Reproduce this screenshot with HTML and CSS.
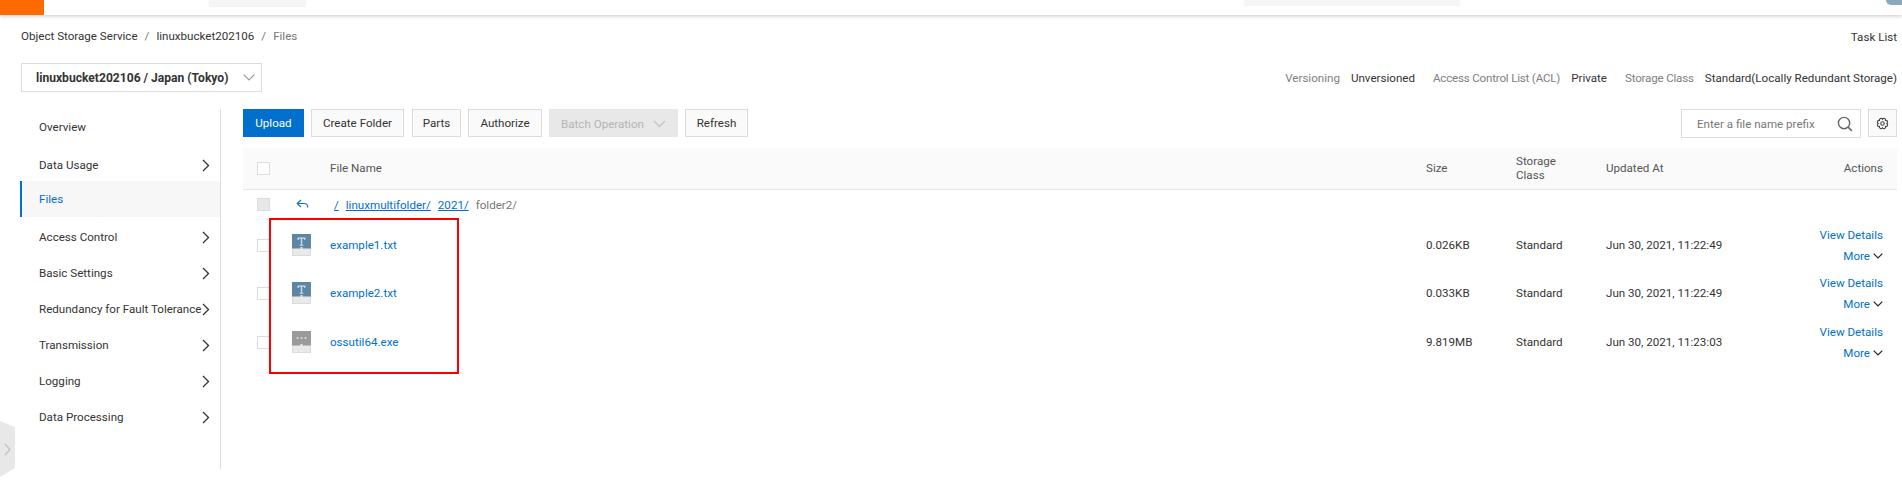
FILE: index.html
```html
<!DOCTYPE html>
<html lang="en">
<head>
<meta charset="utf-8">
<title>Object Storage Service - Files</title>
<link rel="stylesheet" href="styles.css">
</head>
<body>
<header class="topbar">
  <div class="logo"></div>
  <div class="top-search"></div>
  <div class="top-links"></div>
  <div class="avatar"></div>
</header>

<div class="crumbs">
  <nav class="crumb-path">
    <span>Object Storage Service</span><span class="sep">/</span><span>linuxbucket202106</span><span class="sep">/</span><span class="muted">Files</span>
  </nav>
  <span class="task-list">Task List</span>
</div>

<div class="bucketbar">
  <div class="bucket-select">
    <b>linuxbucket202106 / Japan (Tokyo)</b>
    <svg class="sel-caret" width="12" height="7" viewBox="0 0 12 7"><path d="M.7.700L6 6l5.300-5.300" fill="none" stroke="#999" stroke-width="1.200"/></svg>
  </div>
  <div class="meta">
    <span class="meta-l">Versioning</span><span class="meta-v gap1">Unversioned</span>
    <span class="meta-l tight">Access Control List (ACL)</span><span class="meta-v gap2">Private</span>
    <span class="meta-l tight">Storage Class</span><span class="meta-v">Standard(Locally Redundant Storage)</span>
  </div>
</div>

<div class="layout">
  <aside class="sidebar">
    <div class="nav-item">Overview</div>
    <div class="nav-item nav-usage">Data Usage<svg class="chev" width="8" height="13" viewBox="0 0 8 13"><path d="M1 1l5.5 5.500-5.500 5.500" fill="none" stroke="#333" stroke-width="1.300"/></svg></div>
    <div class="nav-item nav-active">Files</div>
    <div class="nav-item nav-access">Access Control<svg class="chev" width="8" height="13" viewBox="0 0 8 13"><path d="M1 1l5.5 5.500-5.500 5.500" fill="none" stroke="#333" stroke-width="1.300"/></svg></div>
    <div class="nav-item">Basic Settings<svg class="chev" width="8" height="13" viewBox="0 0 8 13"><path d="M1 1l5.5 5.500-5.500 5.500" fill="none" stroke="#333" stroke-width="1.300"/></svg></div>
    <div class="nav-item">Redundancy for Fault Tolerance<svg class="chev" width="8" height="13" viewBox="0 0 8 13"><path d="M1 1l5.5 5.500-5.500 5.500" fill="none" stroke="#333" stroke-width="1.300"/></svg></div>
    <div class="nav-item">Transmission<svg class="chev" width="8" height="13" viewBox="0 0 8 13"><path d="M1 1l5.5 5.500-5.500 5.500" fill="none" stroke="#333" stroke-width="1.300"/></svg></div>
    <div class="nav-item">Logging<svg class="chev" width="8" height="13" viewBox="0 0 8 13"><path d="M1 1l5.5 5.500-5.500 5.500" fill="none" stroke="#333" stroke-width="1.300"/></svg></div>
    <div class="nav-item">Data Processing<svg class="chev" width="8" height="13" viewBox="0 0 8 13"><path d="M1 1l5.5 5.500-5.500 5.500" fill="none" stroke="#333" stroke-width="1.300"/></svg></div>
  </aside>

  <main class="content">
    <div class="toolbar">
      <button class="btn btn-primary">Upload</button>
      <button class="btn w-folder">Create Folder</button>
      <button class="btn w-parts">Parts</button>
      <button class="btn w-auth">Authorize</button>
      <button class="btn btn-disabled">Batch Operation<svg width="13" height="8" viewBox="0 0 13 8"><path d="M1 1l5.500 5.500 5.500-5.500" fill="none" stroke="#c4c4c4" stroke-width="1.300"/></svg></button>
      <button class="btn w-refresh">Refresh</button>
      <div class="spacer"></div>
      <div class="search">
        <span class="placeholder">Enter a file name prefix</span>
        <svg width="16" height="16" viewBox="0 0 17 17"><circle cx="7.500" cy="7.500" r="6" fill="none" stroke="#666" stroke-width="1.500"/><path d="M11.800 11.800l4 4" stroke="#666" stroke-width="1.600"/></svg>
      </div>
      <button class="btn btn-gear" aria-label="Settings">
        <svg width="13" height="13" viewBox="0 0 12 12"><path d="M10 6A1.550 1.550 0 0 1 8.830 8.830 1.550 1.550 0 0 1 6 10 1.550 1.550 0 0 1 3.170 8.830 1.550 1.550 0 0 1 2 6 1.550 1.550 0 0 1 3.170 3.170 1.550 1.550 0 0 1 6 2 1.550 1.550 0 0 1 8.830 3.170 1.550 1.550 0 0 1 10 6z" fill="none" stroke="#444" stroke-width="1"/><circle cx="6" cy="6" r="1.600" fill="none" stroke="#444" stroke-width="1"/></svg>
      </button>
    </div>

    <div class="tbl-head tbl-grid">
      <span class="check"></span>
      <span class="col-name">File Name</span>
      <span>Size</span>
      <span class="col-class">Storage<br>Class</span>
      <span>Updated At</span>
      <span class="col-actions">Actions</span>
    </div>

    <div class="path-row">
      <span class="check check-off"></span>
      <svg class="back" width="13" height="11" viewBox="0 0 13 11"><path d="M5 1L1.200 4.500 5 8M1.500 4.500h6.500c2.500 0 3.800 1.500 3.800 4" fill="none" stroke="#1d6fc4" stroke-width="1.200"/></svg>
      <a class="plink first">/</a><a class="plink">linuxmultifolder/</a><a class="plink">2021/</a><span class="muted">folder2/</span>
    </div>

    <div class="row tbl-grid">
      <span class="check"></span>
      <span class="cell-name">
        <svg class="ficon" width="19" height="22" viewBox="0 0 19 22"><rect width="19" height="22" fill="#e9e9e9"/><rect x=".5" y=".5" width="18" height="21" fill="none" stroke="#dcdcdc"/><rect width="19" height="14.500" fill="#5c86a3"/><rect x="8.500" y="13" width="2" height="2" fill="#e9e9e9"/><path d="M5.500 3.500h8v2.500h-1l-.5-1.300h-1.800v6.100h1.200v.9H7.600v-.9h1.200V4.700H7L6.500 6h-1z" fill="#cfdbe4"/></svg>
        <a class="link">example1.txt</a>
      </span>
      <span>0.026KB</span>
      <span>Standard</span>
      <span>Jun 30, 2021, 11:22:49</span>
      <span class="actions"><a class="link">View Details</a><span class="more"><a class="link">More</a><svg width="10" height="6" viewBox="0 0 10 6"><path d="M.7.700L5 5l4.300-4.300" fill="none" stroke="#222" stroke-width="1.200"/></svg></span></span>
    </div>
    <div class="row tbl-grid">
      <span class="check"></span>
      <span class="cell-name">
        <svg class="ficon" width="19" height="22" viewBox="0 0 19 22"><rect width="19" height="22" fill="#e9e9e9"/><rect x=".5" y=".5" width="18" height="21" fill="none" stroke="#dcdcdc"/><rect width="19" height="14.500" fill="#5c86a3"/><rect x="8.500" y="13" width="2" height="2" fill="#e9e9e9"/><path d="M5.500 3.500h8v2.500h-1l-.5-1.300h-1.800v6.100h1.200v.9H7.600v-.9h1.200V4.700H7L6.500 6h-1z" fill="#cfdbe4"/></svg>
        <a class="link">example2.txt</a>
      </span>
      <span>0.033KB</span>
      <span>Standard</span>
      <span>Jun 30, 2021, 11:22:49</span>
      <span class="actions"><a class="link">View Details</a><span class="more"><a class="link">More</a><svg width="10" height="6" viewBox="0 0 10 6"><path d="M.7.700L5 5l4.300-4.300" fill="none" stroke="#222" stroke-width="1.200"/></svg></span></span>
    </div>
    <div class="row tbl-grid">
      <span class="check"></span>
      <span class="cell-name">
        <svg class="ficon" width="19" height="22" viewBox="0 0 19 22"><rect width="19" height="22" fill="#e9e9e9"/><rect x=".5" y=".5" width="18" height="21" fill="none" stroke="#dcdcdc"/><rect width="19" height="14.500" fill="#9a9a9a"/><rect x="8.500" y="13" width="2" height="2" fill="#e9e9e9"/><circle cx="5.500" cy="7" r="1" fill="#ddd"/><circle cx="9.500" cy="7" r="1" fill="#ddd"/><circle cx="13.500" cy="7" r="1" fill="#ddd"/></svg>
        <a class="link">ossutil64.exe</a>
      </span>
      <span>9.819MB</span>
      <span>Standard</span>
      <span>Jun 30, 2021, 11:23:03</span>
      <span class="actions"><a class="link">View Details</a><span class="more"><a class="link">More</a><svg width="10" height="6" viewBox="0 0 10 6"><path d="M.7.700L5 5l4.300-4.300" fill="none" stroke="#222" stroke-width="1.200"/></svg></span></span>
    </div>
  </main>
</div>

<div class="highlight"></div>
<div class="handle">
  <svg width="7" height="13" viewBox="0 0 7 13"><path d="M1 1l5 5.500-5 5.500" fill="none" stroke="#c2c2c2" stroke-width="1.300"/></svg>
</div>
</body>
</html>
```
FILE: styles.css
```css
* { box-sizing: border-box; }
html, body { margin: 0; padding: 0; }
body {
  position: relative;
  height: 497px;
  overflow: hidden;
  background: #fff;
  color: #333;
  font-family: Roboto, "Liberation Sans", sans-serif;
  font-size: 11.600px;
  line-height: 16px;
}

.topbar {
  display: flex;
  align-items: flex-start;
  height: 15px;
  background: #fff;
  box-shadow: 0 1px 4px rgba(0, 0, 0, .22);
}
.logo { width: 44px; height: 15px; background: #ff6a00; }
.top-search { width: 97px; height: 7px; margin-left: 165px; background: #f4f5f6; }
.top-links { width: 216px; height: 6px; margin-left: 938px; background: #f4f5f6; }
.avatar { width: 20px; height: 5px; margin-left: auto; margin-right: -4px; background: #8aa9bd; border-radius: 0 0 10px 10px; }

.crumbs {
  display: flex;
  justify-content: space-between;
  align-items: center;
  height: 20px;
  margin-top: 11px;
  padding: 0 5px 0 21px;
}
.crumb-path { color: #333; }
.sep { margin: 0 7px; color: #777; }
.muted { color: #777; }
.task-list { position: relative; top: 1px; color: #333; }

.bucketbar {
  display: flex;
  justify-content: space-between;
  align-items: center;
  margin-top: 17px;
  padding: 0 5px 0 21px;
}
.bucket-select {
  display: flex;
  align-items: center;
  justify-content: space-between;
  width: 241px;
  height: 29px;
  padding: 0 6px 0 14px;
  border: 1px solid #dcdcdc;
  color: #333;
}
.bucket-select b { font-weight: 700; font-size: 12.100px; white-space: nowrap; }
.meta { display: flex; align-items: center; }
.meta-l { color: #808080; margin-right: 11px; }
.tight { letter-spacing: -.2px; }
.meta-v { color: #333; }
.gap1 { margin-right: 18px; }
.gap2 { margin-right: 18px; }

.layout {
  display: flex;
  margin-top: 17px;
  padding-left: 20px;
}
.sidebar {
  width: 201px;
  height: 360px;
  border-right: 1px solid #dcdcdc;
  flex: none;
}
.nav-item {
  display: flex;
  align-items: center;
  justify-content: space-between;
  height: 36px;
  padding: 0 10px 0 19px;
  color: #333;
  white-space: nowrap;
}
.nav-usage { height: 34px; margin-top: 2px; padding-top: 2px; }
.nav-active {
  height: 36px;
  padding-left: 17px;
  border-left: 2px solid #0070cc;
  background: #f7f7f7;
  color: #0070cc;
}
.nav-access { margin-top: 2px; }
.chev { flex: none; }

.content { width: 1654px; margin-left: 22px; }

.toolbar { display: flex; align-items: flex-start; gap: 7px; height: 39px; }
.btn {
  display: flex;
  align-items: center;
  justify-content: center;
  height: 28px;
  padding: 0;
  border: 1px solid #dcdcdc;
  background: #fafafa;
  color: #333;
  font: inherit;
}
.btn-primary { width: 61px; border-color: #0070cc; background: #0070cc; color: #fff; }
.w-folder { width: 93px; }
.w-parts { width: 49px; margin-left: 1px; }
.w-auth { width: 74px; }
.btn-disabled { width: 129px; gap: 9px; border-color: #e8e8e8; background: #e8e8e8; color: #b5b5b5; padding-top: 1px; }
.w-refresh { width: 63px; }
.spacer { flex: 1; }
.search {
  display: flex;
  align-items: center;
  justify-content: space-between;
  width: 180px;
  height: 29px;
  padding: 0 7px 0 15px;
  border: 1px solid #dcdcdc;
  background: #fff;
}
.placeholder { color: #777; }
.btn-gear { width: 29px; }

.tbl-grid {
  display: grid;
  grid-template-columns: 87px 1096px 90px 90px 1fr auto;
  align-items: center;
}
.check {
  display: block;
  width: 13px;
  height: 13px;
  margin-left: 14px;
  border: 1px solid #dcdcdc;
  background: #fff;
}
.check-off { background: #e8e8e8; flex: none; }

.tbl-head {
  height: 42px;
  padding-bottom: 1px;
  background: #fafafa;
  border-bottom: 1px solid #e6e6e6;
  color: #555;
}
.col-class { line-height: 14px; }
.col-actions { padding-right: 14px; }

.path-row {
  display: flex;
  align-items: center;
  height: 31px;
  padding-bottom: 2px;
}
.back { margin-left: 26px; flex: none; }
.plink { margin-right: 7px; color: #0070cc; text-decoration: underline; }
.plink.first { margin-left: 25px; }

.row { height: 48px; color: #333; }
.row:last-child { margin-top: 1px; }
.cell-name {
  display: flex;
  align-items: center;
  gap: 19px;
  margin-left: -38px;
}
.ficon { flex: none; }
.link { color: #0070cc; }
.actions {
  display: flex;
  flex-direction: column;
  align-items: flex-end;
  gap: 5px;
  padding-right: 14px;
}
.more { display: flex; align-items: center; gap: 3px; }

.highlight {
  position: absolute;
  left: 269px;
  top: 218px;
  width: 190px;
  height: 156px;
  border: 2px solid #f00;
}
.handle {
  position: absolute;
  left: 0;
  top: 421px;
  width: 15px;
  height: 56px;
  display: flex;
  align-items: center;
  padding-left: 4px;
  background: #e8e8e8;
  clip-path: polygon(0 0, 100% 11%, 100% 84%, 0 100%);
}
```
